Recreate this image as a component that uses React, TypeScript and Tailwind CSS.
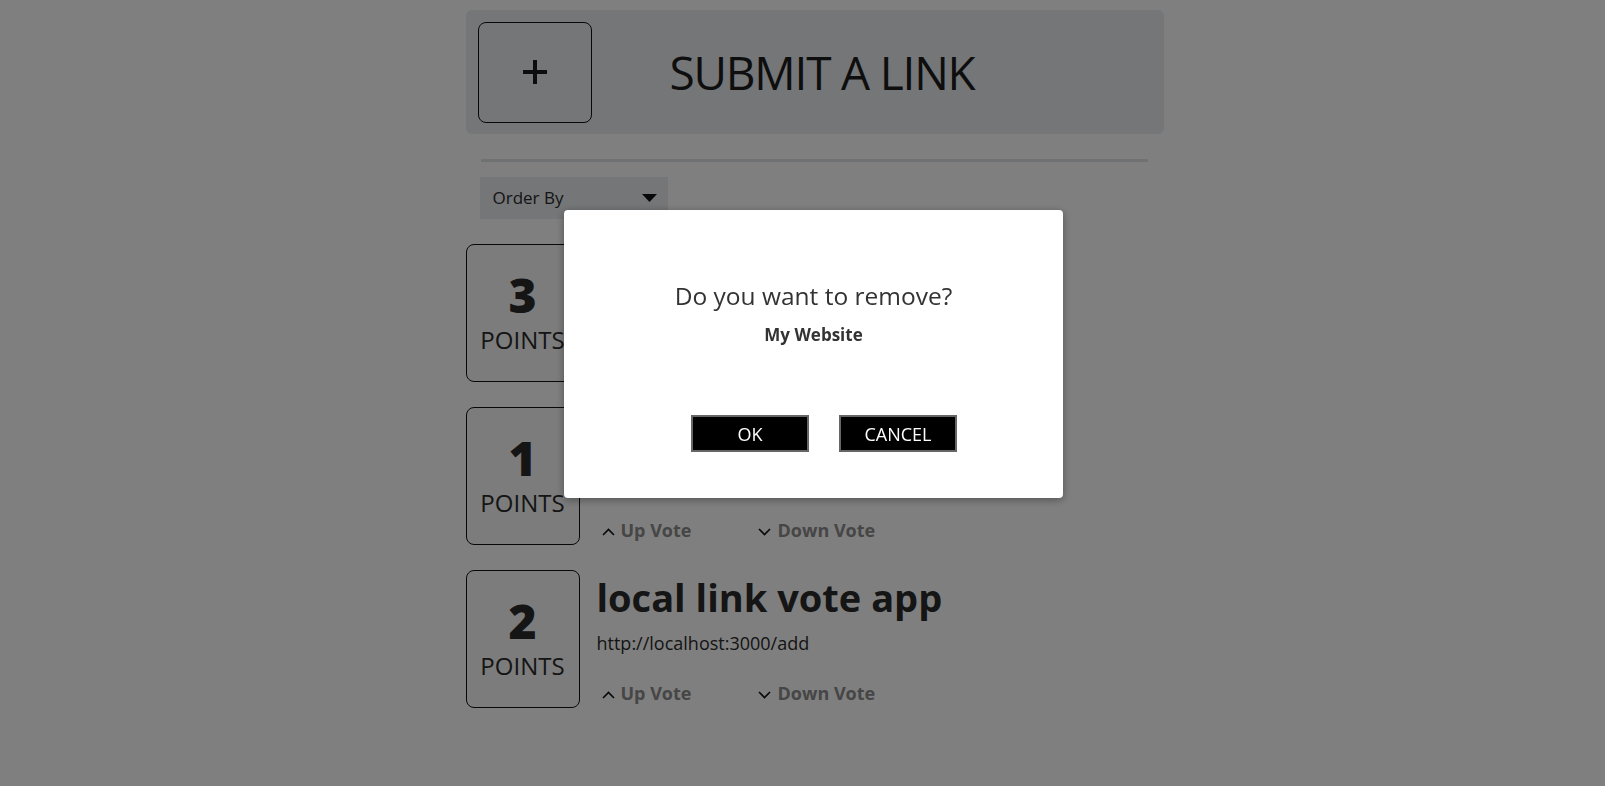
import React from "react";

const font = "font-['Open_Sans','Noto_Sans',sans-serif]";

function ChevronUp() {
  return (
    <svg width="13" height="8" viewBox="0 0 13 8" className="shrink-0 mt-[3px]">
      <polyline points="1,7 6.5,1.5 12,7" fill="none" stroke="#111" strokeWidth="1.6" />
    </svg>
  );
}
function ChevronDown() {
  return (
    <svg width="13" height="8" viewBox="0 0 13 8" className="shrink-0 mt-[3px]">
      <polyline points="1,1 6.5,6.5 12,1" fill="none" stroke="#111" strokeWidth="1.6" />
    </svg>
  );
}

type Item = { points: number; title: string; url: string };

const items: Item[] = [
  { points: 3, title: "My Website", url: "https://www.mywebsite.com" },
  { points: 1, title: "Google", url: "https://www.google.com" },
  { points: 2, title: "local link vote app", url: "http://localhost:3000/add" },
];

function Card({ item }: { item: Item }) {
  return (
    <div className="flex gap-[17px]">
      <div className="w-[114px] h-[138px] shrink-0 border border-[#111] rounded-[8px] bg-[#f8f9fa] flex flex-col items-center justify-center text-[#2a2a2a]">
        <div className="text-[48px] leading-[48px] font-extrabold">{item.points}</div>
        <div className="text-[24px] leading-[30px] mt-[6px]">POINTS</div>
      </div>
      <div className="flex flex-col pt-[3px]">
        <div className="text-[38px] leading-[48px] font-bold text-[#2a2a2a] whitespace-nowrap">{item.title}</div>
        <div className="text-[18px] leading-[24px] mt-[10px] text-[#2a2a2a]">{item.url}</div>
        <div className="flex mt-[26px] text-[18px] leading-[24px] font-bold text-[#8c8c8c]">
          <div className="w-[161px] pl-[5px] flex items-center gap-[6px]">
            <ChevronUp />
            <span>Up Vote</span>
          </div>
          <div className="flex items-center gap-[7px]">
            <ChevronDown />
            <span>Down Vote</span>
          </div>
        </div>
      </div>
    </div>
  );
}

export default function App() {
  return (
    <div className={`min-h-screen bg-white relative ${font}`}>
      <div className="flex justify-center pl-[24px]">
        <div className="w-[698px] pt-[10px]">
          <div className="h-[124px] rounded-[6px] bg-[#e9ecef] p-[12px] flex items-center">
            <div className="w-[114px] h-[101px] border border-[#111] rounded-[8px] flex items-center justify-center">
              <svg width="24" height="24" viewBox="0 0 24 24">
                <rect x="10" y="0" width="4" height="24" fill="#1a1a1a" />
                <rect x="0" y="10" width="24" height="4" fill="#1a1a1a" />
              </svg>
            </div>
            <div className="ml-[78px] text-[46px] leading-none text-[#1c1c1c] tracking-[-1.2px]">SUBMIT A LINK</div>
          </div>
          <div className="mt-[25px] ml-[15px] mr-[16px] h-[3px] bg-[#dee2e6]" />
          <div className="mt-[15px] ml-[14px] w-[188px] h-[42px] bg-[#e9ecef] flex items-center justify-between pl-[13px] pr-[11px] text-[17px] text-[#2a2a2a]">
            <span>Order By</span>
            <svg width="15" height="8" viewBox="0 0 15 8">
              <polygon points="0,0 15,0 7.5,8" fill="#111" />
            </svg>
          </div>
          <div className="mt-[25px] flex flex-col gap-[25px]">
            {items.map((it) => (
              <Card key={it.title} item={it} />
            ))}
          </div>
        </div>
      </div>

      <div className="fixed inset-0 bg-black/50" />

      <div className="fixed left-[564px] top-[210px] w-[499px] h-[288px] bg-white rounded-[4px] shadow-[0_2px_8px_rgba(0,0,0,0.35)] flex flex-col items-center">
        <div className="pt-[70px] text-[24.5px] leading-[32px] text-[#333]">Do you want to remove?</div>
        <div className="mt-[11px] text-[17px] leading-[24px] font-bold text-[#333]">My Website</div>
        <div className="mt-[68px] w-full flex justify-center pl-[21px] gap-[30px]">
          <button className="w-[118px] h-[37px] bg-black border-2 border-[#666] text-white text-[18px] leading-none">OK</button>
          <button className="w-[118px] h-[37px] bg-black border-2 border-[#666] text-white text-[18px] leading-none">CANCEL</button>
        </div>
      </div>
    </div>
  );
}
